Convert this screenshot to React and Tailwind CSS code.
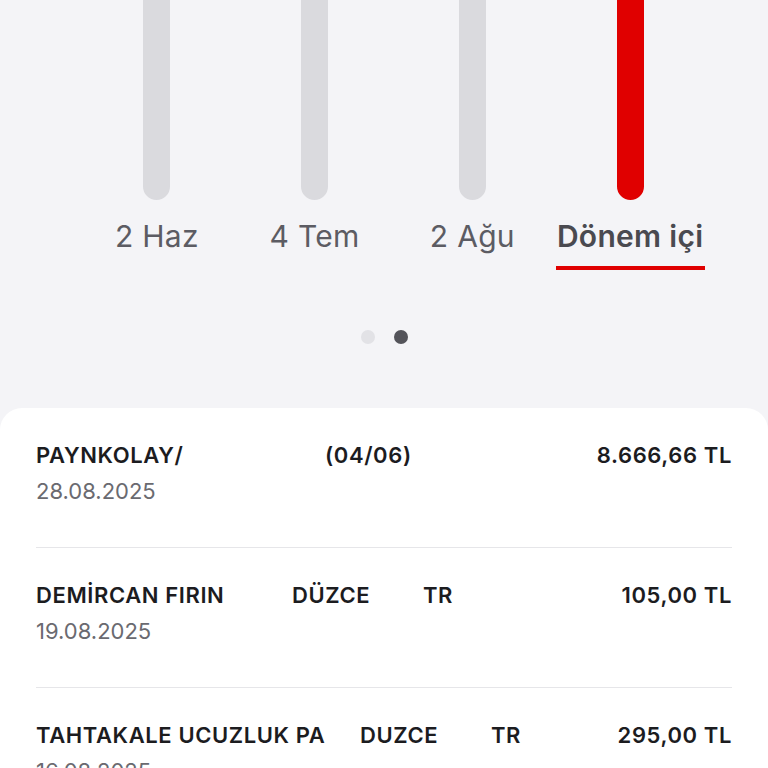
import React from "react";

const bars = [
  { label: "2 Haz", active: false },
  { label: "4 Tem", active: false },
  { label: "2 Ağu", active: false },
  { label: "Dönem içi", active: true },
];

const rows = [
  { cols: [["PAYNKOLAY/", "w-[289px]"], ["(04/06)", ""]], date: "28.08.2025", amount: "8.666,66 TL" },
  { cols: [["DEMİRCAN FIRIN", "w-[256px]"], ["DÜZCE", "w-[131px]"], ["TR", ""]], date: "19.08.2025", amount: "105,00 TL" },
  { cols: [["TAHTAKALE UCUZLUK PA", "w-[324px]"], ["DUZCE", "w-[131px]"], ["TR", ""]], date: "16.08.2025", amount: "295,00 TL" },
];

export default function App() {
  return (
    <div
      className="w-[768px] h-[768px] overflow-hidden bg-[#f4f4f7] flex flex-col"
      style={{ fontFamily: "Inter, 'Noto Sans', sans-serif" }}
    >
      <div className="ml-[78px] w-[631px] grid grid-cols-4">
        {bars.map((b) => (
          <div key={b.label} className="flex flex-col items-center">
            <div
              className={`w-[27px] h-[200px] rounded-b-full ${b.active ? "bg-[#e00000]" : "bg-[#dadade]"}`}
            />
            <div
              className={`mt-[16px] text-[30px] leading-[40px] whitespace-nowrap tracking-[0.3px] ${
                b.active ? "font-semibold text-[#4a4a50]" : "text-[#5c5c63]"
              }`}
            >
              {b.label}
            </div>
            {b.active ? (
              <div className="mt-[10px] w-[149px] h-[4px] bg-[#e00000]" />
            ) : (
              <div className="mt-[10px] h-[4px]" />
            )}
          </div>
        ))}
      </div>

      <div className="flex justify-center gap-[19px] mt-[60px]">
        <div className="w-[14px] h-[14px] rounded-full bg-[#e2e2e6]" />
        <div className="w-[14px] h-[14px] rounded-full bg-[#54545a]" />
      </div>

      <div className="mt-[64px] flex-1 bg-white rounded-t-[22px] px-[36px]">
        {rows.map((r, i) => (
          <div key={i} className="pt-[32px] h-[140px] border-b border-[#e6e6e9]">
            <div className="flex items-center text-[22px] leading-[30px] font-semibold text-[#1c1c1f] tracking-[0.6px]">
              {r.cols.map(([t, w], j) => (
                <span key={j} className={`whitespace-nowrap ${w}`}>
                  {t}
                </span>
              ))}
              <span className="ml-auto">{r.amount}</span>
            </div>
            <div className="mt-[6px] text-[22px] leading-[30px] text-[#6a6a70] tracking-[0px]">
              {r.date}
            </div>
          </div>
        ))}
      </div>
    </div>
  );
}
